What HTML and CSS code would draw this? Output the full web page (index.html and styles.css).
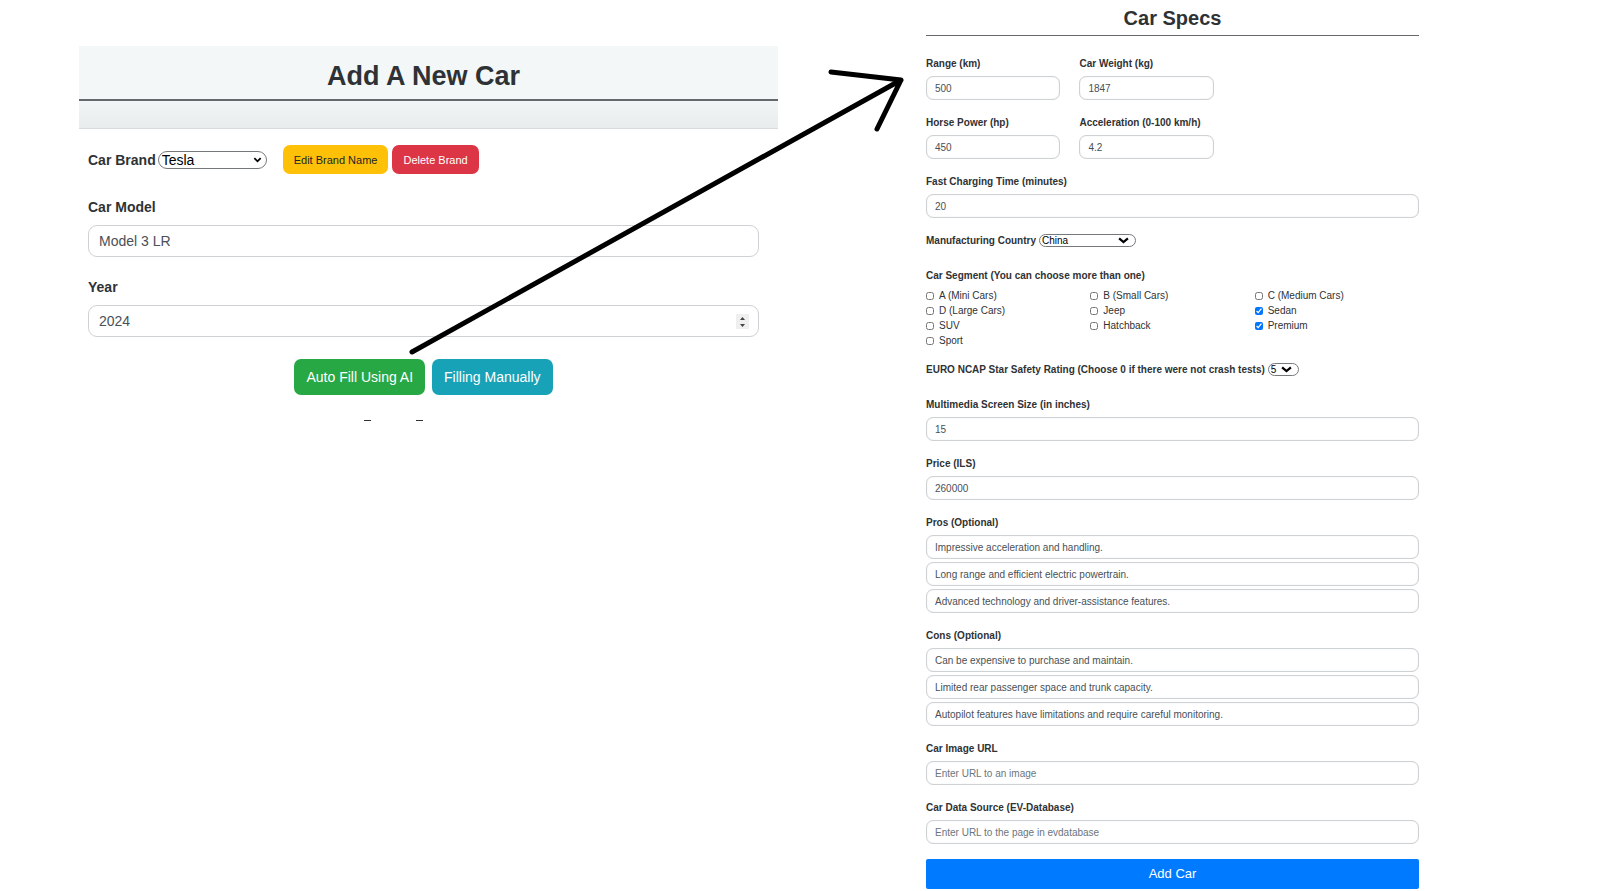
FILE: index.html
```html
<!DOCTYPE html>
<html lang="en">
<head>
<meta charset="utf-8">
<title>Add A New Car</title>
<link rel="stylesheet" href="styles.css">
</head>
<body>
<main class="page">
  <section class="new-car">
    <header class="banner">
      <h1 class="banner-title">Add A New Car</h1>
      <div class="banner-fade"></div>
    </header>
    <form class="car-form">
      <div class="brand-row">
        <label class="label" for="brand">Car Brand</label>
        <span class="select brand-select">
          <select id="brand"><option>Tesla</option></select>
          <svg class="chevron" viewBox="0 0 10 6"><path d="M1.5 1 5 4.5 8.5 1"/></svg>
        </span>
        <div class="brand-actions">
          <button type="button" class="btn btn-small btn-warning">Edit Brand Name</button>
          <button type="button" class="btn btn-small btn-danger">Delete Brand</button>
        </div>
      </div>
      <div class="field">
        <label class="label" for="model">Car Model</label>
        <input class="input" id="model" type="text" value="Model 3 LR">
      </div>
      <div class="field">
        <label class="label" for="year">Year</label>
        <span class="year-box">
          <input class="input" id="year" type="number" value="2024">
          <svg class="spinner" viewBox="0 0 13 15"><rect width="13" height="15"/><path d="M4 6 6.5 3 9 6zM4 10 6.5 13 9 10z"/></svg>
        </span>
      </div>
      <div class="fill-actions">
        <button type="button" class="btn btn-success">Auto Fill Using AI</button>
        <button type="button" class="btn btn-info">Filling Manually</button>
      </div>
      <svg class="marks" viewBox="0 0 132 1" aria-hidden="true"><path d="M6 0h7v1H6zM58 0h7v1h-7z"/></svg>
    </form>
  </section>

  <form class="specs">
    <h2 class="specs-title">Car Specs</h2>
    <div class="pair">
      <div class="group"><label for="range">Range (km)</label><input id="range" type="text" value="500"></div>
      <div class="group"><label for="weight">Car Weight (kg)</label><input id="weight" type="text" value="1847"></div>
    </div>
    <div class="pair">
      <div class="group"><label for="power">Horse Power (hp)</label><input id="power" type="text" value="450"></div>
      <div class="group"><label class="nowrap" for="accel">Acceleration (0-100 km/h)</label><input id="accel" type="text" value="4.2"></div>
    </div>
    <div class="group"><label for="charge">Fast Charging Time (minutes)</label><input id="charge" type="text" value="20"></div>
    <div class="inline-group">
      <label for="country">Manufacturing Country</label>
      <span class="select country-select">
        <select id="country"><option>China</option></select>
        <svg class="chevron" viewBox="0 0 10 6"><path d="M1 1 5 4.5 9 1"/></svg>
      </span>
    </div>
    <fieldset class="segments">
      <legend>Car Segment (You can choose more than one)</legend>
      <div class="segment-grid">
        <label><input type="checkbox">A (Mini Cars)</label>
        <label><input type="checkbox">B (Small Cars)</label>
        <label><input type="checkbox">C (Medium Cars)</label>
        <label><input type="checkbox">D (Large Cars)</label>
        <label><input type="checkbox">Jeep</label>
        <label><input type="checkbox" checked>Sedan</label>
        <label><input type="checkbox">SUV</label>
        <label><input type="checkbox">Hatchback</label>
        <label><input type="checkbox" checked>Premium</label>
        <label><input type="checkbox">Sport</label>
      </div>
    </fieldset>
    <div class="inline-group">
      <label for="ncap">EURO NCAP Star Safety Rating (Choose 0 if there were not crash tests)</label>
      <span class="select ncap-select">
        <select id="ncap"><option>5</option></select>
        <svg class="chevron" viewBox="0 0 10 6"><path d="M1 1 5 4.5 9 1"/></svg>
      </span>
    </div>
    <div class="group"><label for="screen">Multimedia Screen Size (in inches)</label><input id="screen" type="text" value="15"></div>
    <div class="group"><label for="price">Price (ILS)</label><input id="price" type="text" value="260000"></div>
    <div class="group">
      <label for="pro1">Pros (Optional)</label>
      <div class="stack">
        <input id="pro1" type="text" value="Impressive acceleration and handling.">
        <input aria-label="Pro 2" type="text" value="Long range and efficient electric powertrain.">
        <input aria-label="Pro 3" type="text" value="Advanced technology and driver-assistance features.">
      </div>
    </div>
    <div class="group">
      <label for="con1">Cons (Optional)</label>
      <div class="stack">
        <input id="con1" type="text" value="Can be expensive to purchase and maintain.">
        <input aria-label="Con 2" type="text" value="Limited rear passenger space and trunk capacity.">
        <input aria-label="Con 3" type="text" value="Autopilot features have limitations and require careful monitoring.">
      </div>
    </div>
    <div class="group"><label for="image">Car Image URL</label><input id="image" type="text" placeholder="Enter URL to an image"></div>
    <div class="group"><label for="source">Car Data Source (EV-Database)</label><input id="source" type="text" placeholder="Enter URL to the page in evdatabase"></div>
    <button type="button" class="submit">Add Car</button>
  </form>
</main>
<svg class="arrow" viewBox="0 0 1602 891" aria-hidden="true">
  <path d="M412 352 901 80M831 72 901 80 877 129"/>
</svg>
</body>
</html>
```

FILE: styles.css
```css
* { box-sizing: border-box; }

body {
  margin: 0;
  background: #fff;
  color: #2f3235;
  font-family: "Liberation Sans", Arial, sans-serif;
}

button, input, select { font-family: inherit; }

.page {
  display: grid;
  grid-template-columns: 699fr 493fr;
  gap: 148px;
  padding: 0 183px 0 79px;
  align-items: start;
}

/* Left: new car form */
.new-car { margin-top: 46px; }

.banner { background: #f3f7f8; border-bottom: 1px solid #d9dcde; }

.banner-title {
  margin: 0;
  padding: 15px 19px 7px 9px;
  border-bottom: 2px solid #66696c;
  font-size: 27px;
  line-height: 31px;
  text-align: center;
}

.banner-fade {
  height: 27px;
  background: linear-gradient(#f1f5f6, #e9eced);
}

.car-form { padding: 16px 19px 0 9px; }

.label {
  font-size: 14px;
  line-height: 16px;
  font-weight: bold;
}

.brand-row {
  display: flex;
  align-items: center;
  gap: 2px;
  height: 29px;
  margin-bottom: 25px;
}

.brand-actions { display: flex; gap: 4px; margin-left: 14px; }

.select { position: relative; display: inline-flex; }

.select select {
  width: 100%;
  appearance: none;
  border: 1px solid #76797c;
  border-radius: 9px;
  background: #fff;
  color: #000;
  padding: 0 3px;
}

.chevron {
  position: absolute;
  top: 0;
  bottom: 0;
  margin: auto 0;
  fill: none;
  stroke: #000;
  stroke-width: 2;
  pointer-events: none;
}

.brand-select { width: 109px; }
.brand-select select { height: 18px; font-size: 14px; line-height: 16px; }
.brand-select .chevron { right: 5px; width: 9px; height: 6px; }

.field { display: flex; flex-direction: column; gap: 10px; margin-bottom: 22px; }

.input {
  width: 100%;
  height: 32px;
  padding: 0 10px;
  border: 1px solid #ced2d4;
  border-radius: 9px;
  background: #fff;
  color: #495057;
  font-size: 14px;
}

.year-box { position: relative; display: flex; }
.year-box .input::-webkit-inner-spin-button { appearance: none; }

.spinner {
  position: absolute;
  top: 0;
  bottom: 0;
  right: 10px;
  width: 13px;
  height: 15px;
  margin: auto 0;
  fill: #444;
  pointer-events: none;
}

.spinner rect { fill: #efefef; }

.btn {
  border: 0;
  border-radius: 7px;
  height: 36px;
  padding: 0 15px;
  color: #fff;
  font-size: 14px;
  white-space: nowrap;
}

.btn-small { height: 29px; padding: 0 11px; font-size: 11px; }
.btn-warning { background: #ffc107; color: #212529; }
.btn-danger { background: #dc3545; }
.btn-success { background: #28a745; }
.btn-info { background: #17a2b8; }

.fill-actions { display: flex; justify-content: center; gap: 7px; }
.fill-actions .btn { padding: 0 12px; }

.marks { display: block; width: 132px; height: 1px; margin: 25px auto 0; fill: #2f3235; }

/* Right: specs */
.specs { font-size: 10px; line-height: 15px; }

.specs-title {
  margin: 0 0 20px;
  padding: 6px 0 5px;
  border-bottom: 1px solid #66696c;
  font-size: 20px;
  line-height: 24px;
  text-align: center;
}

.pair {
  display: grid;
  grid-template-columns: 13fr 13fr 18fr;
  column-gap: 19px;
}

.group { display: flex; flex-direction: column; gap: 5px; margin-bottom: 15px; }
.group label, .inline-group label, .segments legend { font-weight: bold; }
.nowrap { white-space: nowrap; }

.group input {
  width: 100%;
  height: 24px;
  padding: 0 8px;
  border: 1px solid #ced2d4;
  border-radius: 7px;
  background: #fff;
  box-shadow: inset 0 0 1px #ced2d4;
  color: #495057;
  font-size: 10px;
}

.group input::placeholder { color: #6c757d; }

.stack { display: grid; gap: 3px; }

.inline-group { display: flex; align-items: center; gap: 3px; height: 15px; margin-bottom: 20px; }
.inline-group select { height: 13px; padding: 0 2px; border-radius: 7px; font-size: 10px; line-height: 11px; }
.inline-group .chevron { width: 11px; height: 7px; }
.country-select { width: 97px; }
.country-select .chevron { right: 7px; }
.ncap-select { width: 31px; }
.ncap-select .chevron { right: 7px; }

.segments { margin: 0 0 14px; padding: 0; border: 0; }
.segments legend { padding: 0; margin-bottom: 5px; }

.segment-grid { display: grid; grid-template-columns: repeat(3, 1fr); }
.segment-grid label { display: flex; align-items: center; gap: 5px; }
.segment-grid input { width: 8px; height: 8px; margin: 0; accent-color: #0075ff; }

.submit {
  display: block;
  width: 100%;
  height: 30px;
  padding: 0 0 2px;
  border: 0;
  border-radius: 2px;
  background: #007bff;
  color: #fff;
  font-size: 13px;
}

/* Arrow from the auto-fill button to the specs */
.arrow {
  position: absolute;
  top: 0;
  left: 0;
  width: 100%;
  fill: none;
  stroke: #000;
  stroke-width: 5;
  stroke-linecap: round;
  stroke-linejoin: round;
  pointer-events: none;
}
```
